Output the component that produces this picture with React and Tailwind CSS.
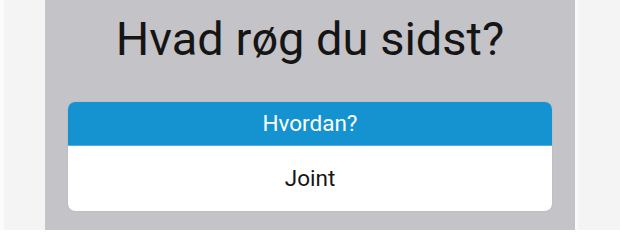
export default function App() {
  return (
    <div className="w-[620px] h-[230px] flex bg-[#f4f4f4] overflow-hidden" style={{ fontFamily: 'Roboto, "Liberation Sans", sans-serif' }}>
      <div className="w-[4px] bg-[#fbfbfb]" />
      <div className="w-[41px]" />
      <div className="w-[530px] h-full bg-[#c4c3c8] flex flex-col px-[23px]">
        <div className="h-[102px] flex items-start justify-center pt-[9px]">
          <h1 className="text-[47px] leading-[60px] text-[#151515]">Hvad røg du sidst?</h1>
        </div>
        <div className="rounded-[7px] overflow-hidden bg-white shadow-[0_0_1px_rgba(0,0,0,0.25)]">
          <div className="h-[44px] bg-[#1592d0] border-b border-[#4fb0e4] flex items-center justify-center text-white text-[22.5px]">
            Hvordan?
          </div>
          <div className="h-[65px] flex items-center justify-center text-[#151515] text-[22.5px]">
            Joint
          </div>
        </div>
      </div>
      <div className="w-[3px] bg-[#f9f9f9]" />
      <div className="flex-1" />
    </div>
  );
}
